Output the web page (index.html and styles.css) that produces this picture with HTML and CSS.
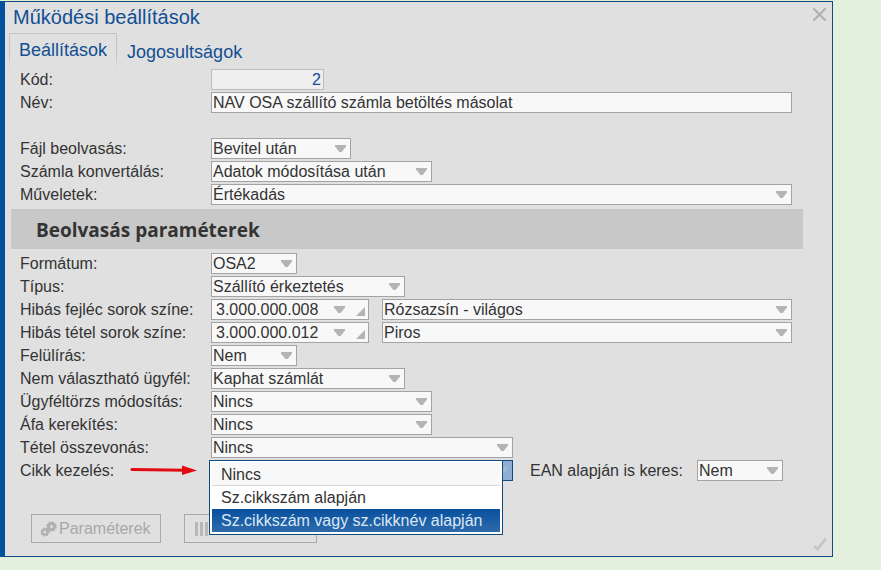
FILE: index.html
```
<!DOCTYPE html>
<html lang="hu">
<head>
    <meta charset="UTF-8">
    <meta name="viewport" content="width=device-width, initial-scale=1.0">
    <title>Működési beállítások</title>
    <link rel="stylesheet" href="styles.css">
</head>
<body>
    <div class="page">
        <main class="dialog">
            <header class="dialog-header">
                <h1>Működési beállítások</h1>
                <button type="button" class="close" aria-label="Bezárás">
                    <svg width="13" height="13" viewBox="0 0 13 13"><path d="M1 1 L12 12 M12 1 L1 12" fill="none" stroke="#b2b0b0" stroke-width="2" stroke-linecap="round"/></svg>
                </button>
            </header>

            <nav class="tabs">
                <a href="#beallitasok" class="tab active">Beállítások</a>
                <a href="#jogosultsagok" class="tab">Jogosultságok</a>
            </nav>

            <form id="beallitasok">
                <div class="rows">
                    <div class="row">
                        <label for="kod">Kód:</label>
                        <input type="text" id="kod" class="field code" value="2" readonly>
                    </div>
                    <div class="row">
                        <label for="nev">Név:</label>
                        <input type="text" id="nev" class="field wide" value="NAV OSA szállító számla betöltés másolat">
                    </div>
                    <div class="row"></div>
                    <div class="row">
                        <label for="fajl">Fájl beolvasás:</label>
                        <span class="combo w140"><select id="fajl" class="field"><option>Bevitel után</option></select></span>
                    </div>
                    <div class="row">
                        <label for="konvertalas">Számla konvertálás:</label>
                        <span class="combo w221"><select id="konvertalas" class="field"><option>Adatok módosítása után</option></select></span>
                    </div>
                    <div class="row">
                        <label for="muveletek">Műveletek:</label>
                        <span class="combo wide"><select id="muveletek" class="field"><option>Értékadás</option></select></span>
                    </div>
                </div>

                <h2>Beolvasás paraméterek</h2>

                <div class="rows">
                    <div class="row">
                        <label for="formatum">Formátum:</label>
                        <span class="combo w86"><select id="formatum" class="field"><option>OSA2</option></select></span>
                    </div>
                    <div class="row">
                        <label for="tipus">Típus:</label>
                        <span class="combo w194"><select id="tipus" class="field"><option>Szállító érkeztetés</option></select></span>
                    </div>
                    <div class="row">
                        <label for="fejlec">Hibás fejléc sorok színe:</label>
                        <span class="combo lookup"><input type="text" id="fejlec" class="field" value="3.000.000.008"></span>
                        <span class="combo wide"><select class="field" aria-label="Fejléc szín"><option>Rózsazsín - világos</option></select></span>
                    </div>
                    <div class="row">
                        <label for="tetel">Hibás tétel sorok színe:</label>
                        <span class="combo lookup"><input type="text" id="tetel" class="field" value="3.000.000.012"></span>
                        <span class="combo wide"><select class="field" aria-label="Tétel szín"><option>Piros</option></select></span>
                    </div>
                    <div class="row">
                        <label for="feluliras">Felülírás:</label>
                        <span class="combo w86"><select id="feluliras" class="field"><option>Nem</option></select></span>
                    </div>
                    <div class="row">
                        <label for="ugyfel">Nem választható ügyfél:</label>
                        <span class="combo w194"><select id="ugyfel" class="field"><option>Kaphat számlát</option></select></span>
                    </div>
                    <div class="row">
                        <label for="torzs">Ügyféltörzs módosítás:</label>
                        <span class="combo w221"><select id="torzs" class="field"><option>Nincs</option></select></span>
                    </div>
                    <div class="row">
                        <label for="afa">Áfa kerekítés:</label>
                        <span class="combo w221"><select id="afa" class="field"><option>Nincs</option></select></span>
                    </div>
                    <div class="row">
                        <label for="osszevonas">Tétel összevonás:</label>
                        <span class="combo w302"><select id="osszevonas" class="field"><option>Nincs</option></select></span>
                    </div>
                    <div class="row">
                        <label for="cikk">Cikk kezelés:
                            <svg class="pointer" width="68" height="12" viewBox="0 0 68 12"><path d="M2 5.5 L56 6.3" stroke="#e30b13" stroke-width="3" stroke-linecap="round"/><path d="M52 1.5 L67 6.5 L52 11 Z" fill="#e30b13"/></svg>
                        </label>
                        <div class="combo w302 open">
                            <select id="cikk" class="field"><option></option></select>
                            <ul class="menu" role="listbox" aria-label="Cikk kezelés">
                                <li role="option">Nincs</li>
                                <li role="option">Sz.cikkszám alapján</li>
                                <li role="option" aria-selected="true" class="selected">Sz.cikkszám vagy sz.cikknév alapján</li>
                            </ul>
                        </div>
                        <label for="ean" class="second">EAN alapján is keres:</label>
                        <span class="combo w86"><select id="ean" class="field"><option>Nem</option></select></span>
                    </div>
                </div>

                <footer class="actions">
                    <button type="button" class="btn params" disabled>
                        <svg width="18" height="16" viewBox="0 0 18 16" fill="none" stroke="#b0b0b0"><circle cx="5" cy="11" r="2.5" stroke-width="2"/><circle cx="5" cy="11" r="3.8" stroke-width="1.4" stroke-dasharray="1.8 1.2"/><circle cx="11.5" cy="5.5" r="3" stroke-width="3"/><circle cx="11.5" cy="5.5" r="4.6" stroke-width="1.4" stroke-dasharray="2 1.6"/></svg>
                        Paraméterek
                    </button>
                    <button type="button" class="btn columns" aria-label="Oszlopok" disabled>
                        <svg width="18" height="16" viewBox="0 0 18 16"><path d="M3.5 1 V15 M8.5 1 V15 M13.5 1 V15" stroke="#b8b8b8" stroke-width="3"/></svg>
                    </button>
                    <button type="submit" class="ok" aria-label="Mentés">
                        <svg width="14" height="14" viewBox="0 0 14 14"><path d="M1 9 L4.5 12 L13 1.5" fill="none" stroke="#c4c4c4" stroke-width="2.5"/></svg>
                    </button>
                </footer>
            </form>
        </main>
    </div>
</body>
</html>
```
FILE: styles.css
```
* {
    box-sizing: border-box;
}
body {
    margin: 0;
    background-color: white;
    font-family: "Liberation Sans", Arial, sans-serif;
    font-size: 16px;
    color: #333;
}
.page {
    padding: 1px 48px 13px 0;
    background-color: #e3f0de;
}
.dialog {
    border: 1px solid #114a7c;
    border-left: 5px solid #0350a0;
    background-color: #e0e0e0;
}
.dialog-header {
    display: flex;
    justify-content: space-between;
    align-items: flex-start;
    height: 31px;
    padding: 0 6px 0 8px;
}
h1 {
    margin: 0;
    font-size: 20px;
    font-weight: normal;
    line-height: 31px;
    color: #124f94;
}
button {
    font: inherit;
}
.close, .ok {
    display: flex;
    padding: 0;
    border: none;
    background: none;
}
.close {
    margin-top: 6px;
}
.tabs {
    display: flex;
    align-items: flex-end;
    height: 36px;
    padding-left: 4px;
}
.tab {
    padding: 0 10px;
    font-size: 18px;
    line-height: 34px;
    color: #124f94;
    text-decoration: none;
}
.tab.active {
    height: 36px;
    padding: 0 9px;
    border: 1px solid #c4c4c4;
    border-bottom: none;
    border-image: linear-gradient(#c4c4c4 60%, #e0e0e0) 1;
    line-height: 32px;
}
.rows {
    display: flex;
    flex-direction: column;
    gap: 2px;
    padding: 0 40px 0 15px;
}
.row {
    display: flex;
    height: 21px;
}
.row label {
    flex: 0 0 191px;
    line-height: 21px;
    white-space: nowrap;
}
.row .second {
    flex: none;
    margin: 0 14px 0 17px;
}
.field {
    display: block;
    width: 100%;
    height: 21px;
    margin: 0;
    padding: 0 1px;
    border: 1px solid #a3a3a3;
    border-radius: 0;
    outline: none;
    appearance: none;
    background-color: #f8f8f8;
    font: inherit;
    line-height: 19px;
    color: #333;
}
.code {
    width: 113px;
    padding-right: 2px;
    border-color: #bdbdbd;
    background-color: #eee;
    color: #124f94;
    text-align: right;
}
.combo {
    position: relative;
}
.combo::after {
    content: "";
    position: absolute;
    top: 7px;
    right: 5px;
    width: 11px;
    height: 7px;
    background-color: #b4b4b4;
    clip-path: polygon(0 0, 100% 0, 100% 20%, 60% 100%, 40% 100%, 0 20%);
    pointer-events: none;
}
.wide {
    flex: 1;
}
.w86 {
    width: 86px;
}
.w140 {
    width: 140px;
}
.w194 {
    width: 194px;
}
.w221 {
    width: 221px;
}
.w302 {
    width: 302px;
}

/* code field with drop-down and lookup corner */
.lookup {
    width: 158px;
    margin-right: 13px;
}
.lookup .field {
    padding-left: 4px;
}
.lookup::after {
    right: 24px;
}
.lookup::before {
    content: "";
    position: absolute;
    right: 4px;
    bottom: 4px;
    width: 9px;
    height: 9px;
    background-color: #b4b4b4;
    clip-path: polygon(100% 0, 100% 100%, 0 100%);
    pointer-events: none;
}
h2 {
    margin: 4px 29px 4px 6px;
    padding: 3px 25px 0;
    background-color: #c8c8c8;
    font-family: "Open Sans", "Noto Sans", sans-serif;
    font-size: 19px;
    line-height: 37px;
}
.pointer {
    margin-left: 11px;
}
.open .field {
    border-color: #114a7c;
    background-color: #8fadd1;
}
.open::after {
    background-color: #a3b9d3;
}
.menu {
    position: absolute;
    top: 0;
    left: -2px;
    z-index: 1;
    width: 294px;
    margin: 0;
    padding: 2px;
    border: 1px solid #114a7c;
    background-color: white;
    list-style: none;
}
.menu li {
    height: 23px;
    padding-left: 9px;
    line-height: 24px;
    white-space: nowrap;
}
.menu li:first-child {
    border-bottom: 1px solid #d8d8d8;
    background-color: #f8f8f8;
}
.menu .selected {
    background: linear-gradient(#07509f, #2f6bab);
    color: #dce8f5;
}
.actions {
    display: flex;
    align-items: flex-start;
    gap: 23px;
    padding: 33px 5px 5px 26px;
}
.btn {
    display: flex;
    align-items: center;
    height: 29px;
    margin-bottom: 8px;
    padding: 0 8px;
    border: 1px solid #aaa;
    background-color: #e0e0e0;
    color: #a8a8a8;
}
.params {
    width: 130px;
    gap: 1px;
}
.columns {
    width: 133px;
}
.ok {
    margin-left: auto;
    align-self: flex-end;
}
```
